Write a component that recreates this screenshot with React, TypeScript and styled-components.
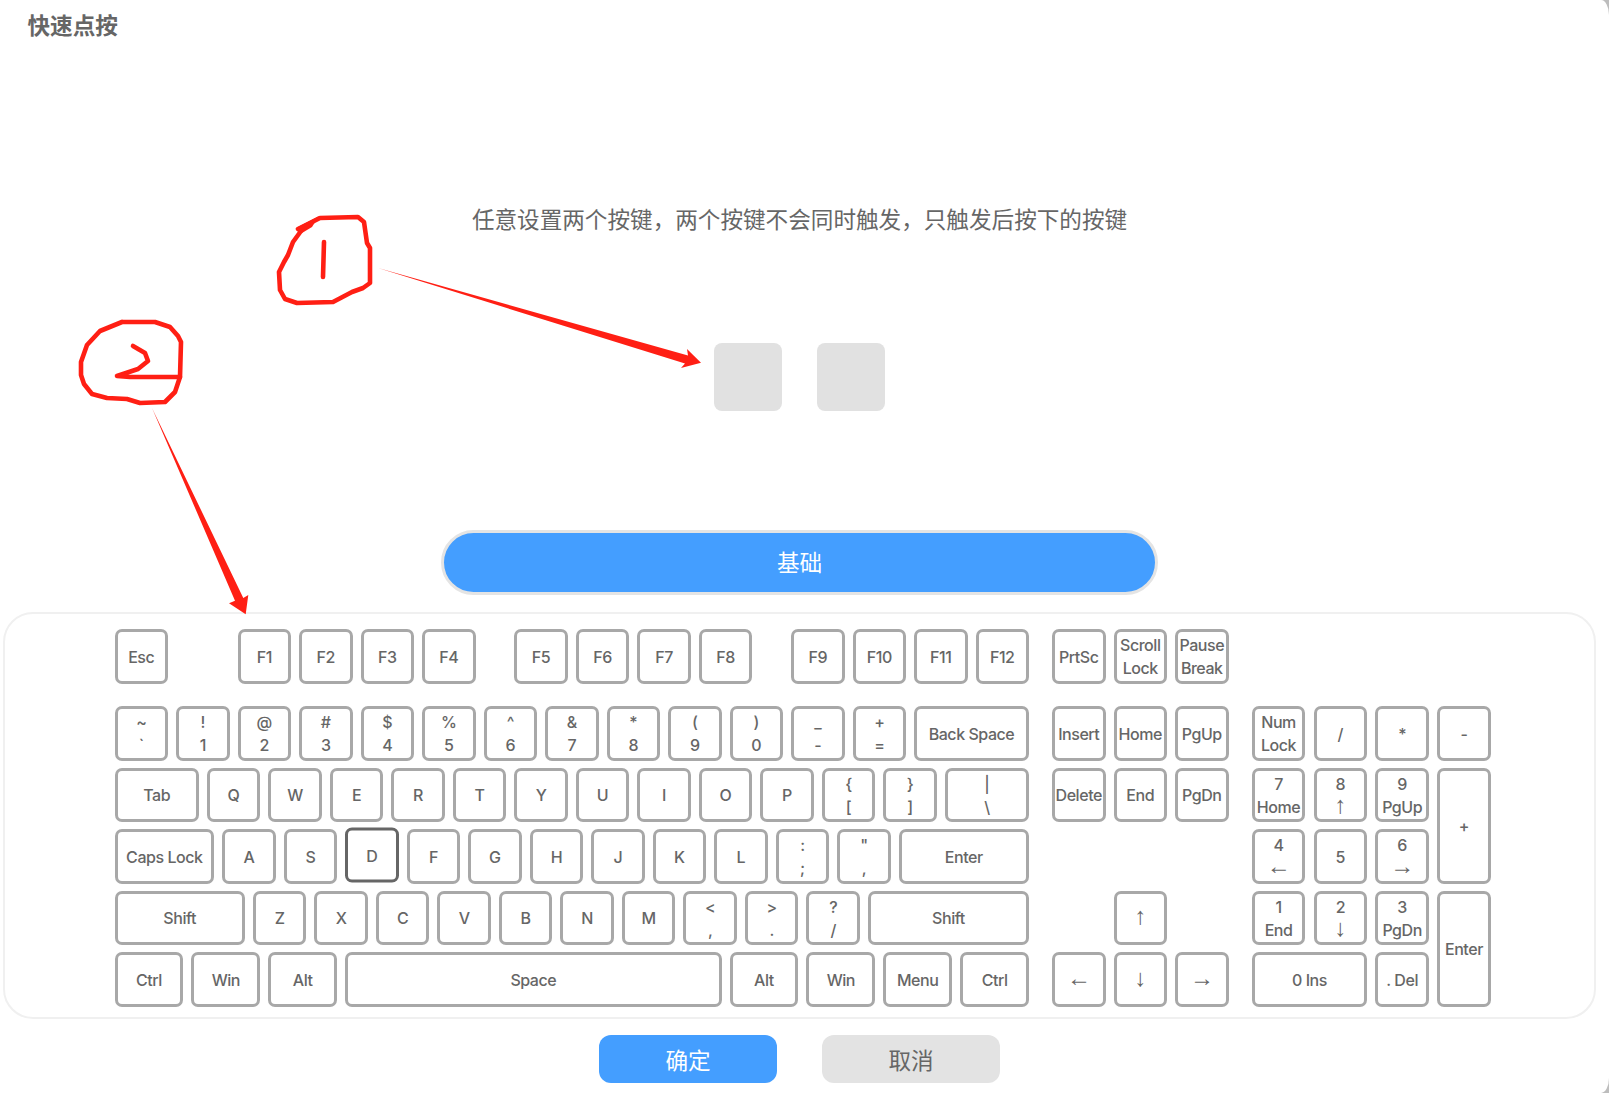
import React from 'react';
import styled, { createGlobalStyle } from 'styled-components';

const UNIT = 61.5;
const GAP = 8;

type KeyDef = { label: string; u?: number; skip?: number; active?: boolean };

const mainRows: KeyDef[][] = [
  [
    { label: 'Esc' },
    { label: 'F1', skip: 1 },
    { label: 'F2' },
    { label: 'F3' },
    { label: 'F4' },
    { label: 'F5', skip: 0.5 },
    { label: 'F6' },
    { label: 'F7' },
    { label: 'F8' },
    { label: 'F9', skip: 0.5 },
    { label: 'F10' },
    { label: 'F11' },
    { label: 'F12' },
  ],
  [
    { label: '~\n`' },
    { label: '!\n1' },
    { label: '@\n2' },
    { label: '#\n3' },
    { label: '$\n4' },
    { label: '%\n5' },
    { label: '^\n6' },
    { label: '&\n7' },
    { label: '*\n8' },
    { label: '(\n9' },
    { label: ')\n0' },
    { label: '_\n-' },
    { label: '+\n=' },
    { label: 'Back Space', u: 2 },
  ],
  [
    { label: 'Tab', u: 1.5 },
    { label: 'Q' },
    { label: 'W' },
    { label: 'E' },
    { label: 'R' },
    { label: 'T' },
    { label: 'Y' },
    { label: 'U' },
    { label: 'I' },
    { label: 'O' },
    { label: 'P' },
    { label: '{\n[' },
    { label: '}\n]' },
    { label: '|\n\\', u: 1.5 },
  ],
  [
    { label: 'Caps Lock', u: 1.75 },
    { label: 'A' },
    { label: 'S' },
    { label: 'D', active: true },
    { label: 'F' },
    { label: 'G' },
    { label: 'H' },
    { label: 'J' },
    { label: 'K' },
    { label: 'L' },
    { label: ':\n;' },
    { label: '"\n,' },
    { label: 'Enter', u: 2.25 },
  ],
  [
    { label: 'Shift', u: 2.25 },
    { label: 'Z' },
    { label: 'X' },
    { label: 'C' },
    { label: 'V' },
    { label: 'B' },
    { label: 'N' },
    { label: 'M' },
    { label: '<\n,' },
    { label: '>\n.' },
    { label: '?\n/' },
    { label: 'Shift', u: 2.75 },
  ],
  [
    { label: 'Ctrl', u: 1.25 },
    { label: 'Win', u: 1.25 },
    { label: 'Alt', u: 1.25 },
    { label: 'Space', u: 6.25 },
    { label: 'Alt', u: 1.25 },
    { label: 'Win', u: 1.25 },
    { label: 'Menu', u: 1.25 },
    { label: 'Ctrl', u: 1.25 },
  ],
];

const navRows: (string | null)[][] = [
  ['PrtSc', 'Scroll\nLock', 'Pause\nBreak'],
  ['Insert', 'Home', 'PgUp'],
  ['Delete', 'End', 'PgDn'],
  [null, null, null],
  [null, '↑', null],
  ['←', '↓', '→'],
];

const numKeys: { label: string; col?: number; row?: number }[] = [
  { label: 'Num\nLock' },
  { label: '/' },
  { label: '*' },
  { label: '-' },
  { label: '7\nHome' },
  { label: '8\n↑' },
  { label: '9\nPgUp' },
  { label: '+', row: 2 },
  { label: '4\n←' },
  { label: '5' },
  { label: '6\n→' },
  { label: '1\nEnd' },
  { label: '2\n↓' },
  { label: '3\nPgDn' },
  { label: 'Enter', row: 2 },
  { label: '0 Ins', col: 2 },
  { label: '. Del' },
];

// arrows come from another font, the key font draws them too short
const keyLabel = (label: string) => (
  <Label>
    {label.split(/([←↑→↓])/).map((part, i) => (i % 2 ? <Arrow key={i}>{part}</Arrow> : part))}
  </Label>
);

export default function App() {
  return (
    <>
      <GlobalStyle />
      <Page>
        <Content>
          <Title>快速点按</Title>
          <Hint>任意设置两个按键，两个按键不会同时触发，只触发后按下的按键</Hint>
          <Slots>
            <Slot />
            <Slot />
          </Slots>
          <Tab>基础</Tab>
          <KeyboardPanel>
            <MainBlock>
              {mainRows.map((row, i) => (
                <KeyRow key={i} $first={i === 0}>
                  {row.map((k, j) => (
                    <Key key={j} $u={k.u ?? 1} $skip={k.skip ?? 0} $active={k.active}>
                      {k.label}
                    </Key>
                  ))}
                </KeyRow>
              ))}
            </MainBlock>
            <NavBlock>
              {navRows.map((row, i) => (
                <KeyRow key={i} $first={i === 0}>
                  {row.map((label, j) =>
                    label ? <Key key={j} $u={1}>{keyLabel(label)}</Key> : <BlankKey key={j} />,
                  )}
                </KeyRow>
              ))}
            </NavBlock>
            <NumBlock>
              {numKeys.map((k, i) => (
                <NumKey key={i} $col={k.col ?? 1} $row={k.row ?? 1}>
                  {keyLabel(k.label)}
                </NumKey>
              ))}
            </NumBlock>
          </KeyboardPanel>
          <Actions>
            <ActionButton $primary>确定</ActionButton>
            <ActionButton>取消</ActionButton>
          </Actions>
        </Content>
        <Annotations viewBox="0 0 1609 1093">
          <Scribble d="M298 229 L320 218 L358 217 L364 222 L367 243 L370 248 L370 283 L363 288 L352 292 L333 302 L297 303 L285 299 L280 290 L279 272 L284 262 L288 255 L293 242 L301 231" />
          <polygon fill="#ff1f14" points="298,227 319,216 312,227 302,233" />
          <Scribble d="M324 242 L323 277" />
          <Scribble d="M122 322 L155 322 L170 327 L178 336 L181 342 L180 377 L175 392 L165 402 L140 403 L127 399 L107 398 L92 394 L84 384 L81 375 L81 362 L87 345 L100 331 L122 322" />
          <Scribble d="M133 346 L145 353 L148 361 L138 369 L117 376 L130 377 L180 377" />
          <polygon fill="#ff1f14" points="378,268 688,355.5 687,349 701,362.7 681,368 685,363.5" />
          <polygon fill="#ff1f14" points="152,408 243.3,598 248.3,595 245.7,614.3 229,603.3 235,600.7" />
        </Annotations>
      </Page>
    </>
  );
}

const GlobalStyle = createGlobalStyle`
  html, body {
    margin: 0;
    padding: 0;
    background: #bdbdbd;
  }
  body {
    font-family: Inter, "Noto Sans CJK SC", sans-serif;
  }
`;

const Page = styled.div`
  position: relative;
  width: 1609px;
  height: 1093px;
  overflow: hidden;
  background: #fff;
  border-top-right-radius: 8px 15px;
  border-bottom-right-radius: 8px 15px;
`;

const Content = styled.div`
  width: 1599px;
  display: flex;
  flex-direction: column;
  align-items: center;
`;

const Title = styled.div`
  align-self: flex-start;
  margin: 10px 0 0 27.5px;
  font-family: "Noto Sans CJK SC", sans-serif;
  font-size: 22.6px;
  font-weight: 700;
  line-height: 30px;
  color: #666;
`;

const Hint = styled.div`
  margin-top: 164px;
  font-family: "Noto Sans CJK SC", sans-serif;
  font-size: 22.6px;
  line-height: 30px;
  color: #666;
`;

const Slots = styled.div`
  display: flex;
  gap: 34.5px;
  margin: 109px 0 0 0;
`;

const Slot = styled.div`
  width: 68px;
  height: 68px;
  border-radius: 8px;
  background: #e1e1e1;
`;

const Tab = styled.div`
  box-sizing: border-box;
  width: 717px;
  height: 64.5px;
  margin-top: 119px;
  padding-bottom: 2px;
  display: flex;
  align-items: center;
  justify-content: center;
  border: 3px solid #e4e4e4;
  border-radius: 33px;
  background: #449eff;
  font-family: "Noto Sans CJK SC", sans-serif;
  font-size: 22.6px;
  color: #fff;
`;

const KeyboardPanel = styled.div`
  box-sizing: border-box;
  width: 1593px;
  height: 407.5px;
  margin-top: 17px;
  padding: 15.5px 0 0 109.5px;
  display: flex;
  gap: 23px;
  border: 2px solid #f0f0f0;
  border-radius: 30px;
`;

const MainBlock = styled.div`
  display: flex;
  flex-direction: column;
`;

const NavBlock = styled(MainBlock)``;

const KeyRow = styled.div<{ $first?: boolean }>`
  display: flex;
  gap: ${GAP}px;
  margin-bottom: ${(p) => (p.$first ? 22.5 : 7)}px;
`;

const KeyFace = styled.div`
  box-sizing: border-box;
  flex: none;
  display: flex;
  align-items: center;
  justify-content: center;
  padding-top: 2px;
  border: 3px solid #a8a8a8;
  border-radius: 7px;
  background: #fff;
  font-size: 16px;
  font-weight: 500;
  line-height: 23px;
  letter-spacing: -0.45px;
  color: #666;
  text-align: center;
  white-space: pre-line;
`;

const Label = styled.div``;

const Arrow = styled.span`
  font-family: "Liberation Sans", sans-serif;
  font-size: 24px;
  font-weight: 400;
  line-height: 1px;
`;

const Key = styled(KeyFace)<{ $u: number; $skip?: number; $active?: boolean }>`
  width: ${(p) => p.$u * UNIT - GAP}px;
  height: 54.5px;
  margin-left: ${(p) => (p.$skip ?? 0) * UNIT}px;
  ${(p) => p.$active && 'border-color: #666; transform: translateY(-1.5px);'}
`;

const BlankKey = styled.div`
  flex: none;
  width: ${UNIT - GAP}px;
  height: 54.5px;
`;

const NumBlock = styled.div`
  display: grid;
  grid-template-columns: repeat(4, ${UNIT - GAP}px);
  grid-auto-rows: 54.5px;
  gap: 7px 8.3px;
  margin: 77px 0 0 0.3px;
  align-self: flex-start;
`;

const NumKey = styled(KeyFace)<{ $col: number; $row: number }>`
  grid-column: span ${(p) => p.$col};
  grid-row: span ${(p) => p.$row};
`;

const Actions = styled.div`
  display: flex;
  gap: 44.5px;
  margin-top: 16px;
`;

const ActionButton = styled.button<{ $primary?: boolean }>`
  width: 178.5px;
  height: 48px;
  border: none;
  border-radius: 12px;
  background: ${(p) => (p.$primary ? '#449eff' : '#e3e3e3')};
  color: ${(p) => (p.$primary ? '#fff' : '#666')};
  font-family: "Noto Sans CJK SC", sans-serif;
  font-size: 22.6px;
`;

const Annotations = styled.svg`
  position: absolute;
  inset: 0;
  width: 1609px;
  height: 1093px;
  pointer-events: none;
`;

const Scribble = styled.path`
  fill: none;
  stroke: #ff1f14;
  stroke-width: 4.6;
  stroke-linejoin: round;
  stroke-linecap: round;
`;
